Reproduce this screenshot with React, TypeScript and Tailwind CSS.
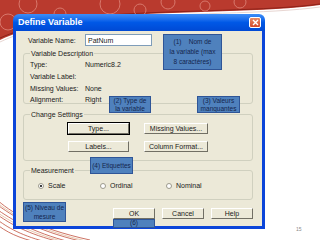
import React from "react";

function Btn({ label, w, focused }: { label: string; w: string; focused?: boolean }) {
    return (
        <div
            className={`${w} h-[11px] flex items-center justify-center bg-[#ECE9D8] border border-t-white border-l-white border-b-[#716F64] border-r-[#716F64] ${
                focused ? "outline outline-1 outline-black" : ""
            }`}
        >
            <span className="text-[7px] leading-none">{label}</span>
        </div>
    );
}

function Radio({ label, checked, w }: { label: string; checked?: boolean; w: string }) {
    return (
        <div className={`${w} flex items-center gap-[4px]`}>
            <div className="w-[6px] h-[6px] rounded-full bg-white border border-[#9C9A8C] flex items-center justify-center">
                {checked && <div className="w-[2px] h-[2px] rounded-full bg-black" />}
            </div>
            <span className="text-[7px] leading-none">{label}</span>
        </div>
    );
}

function Note({ className, children }: { className: string; children: React.ReactNode }) {
    return (
        <div
            className={`absolute flex flex-col items-center justify-center overflow-hidden whitespace-nowrap bg-[#4F81BD] border border-[#2F5597] text-[6.5px] text-[#14264d] ${className}`}
        >
            {children}
        </div>
    );
}

export default function App() {
    return (
        <div className="relative w-[320px] h-[240px] overflow-hidden bg-white font-['Liberation_Sans',Arial,sans-serif] text-[#1a1a1a]">
            {/* slide decoration */}
            <svg className="absolute inset-0" width="320" height="240" viewBox="0 0 320 240">
                <path d="M0 0 H320 V5 C270 12 180 11 110 16 C60 20 25 28 0 40 Z" fill="#B93A2E" />
                <path d="M0 42 C25 30 60 22 110 18 C180 13 270 14 320 7" fill="none" stroke="#E8D6D2" strokeWidth="1" />
                <path d="M0 38 C25 27 60 19 110 15 C180 10 270 11 320 4" fill="none" stroke="#8E2219" strokeWidth="1" />
                <g fill="none" stroke="#D8786C" strokeWidth="1">
                    <circle cx="28" cy="4" r="9" />
                    <circle cx="8" cy="22" r="8" />
                    <circle cx="60" cy="14" r="6" />
                    <circle cx="110" cy="4" r="10" />
                    <circle cx="140" cy="10" r="6" />
                    <circle cx="168" cy="2" r="7" />
                    <circle cx="205" cy="6" r="5" />
                    <circle cx="240" cy="2" r="6" />
                </g>
                <g fill="none" stroke="#C0503E" strokeWidth="0.8">
                    <path d="M-5 198 C10 212 35 228 90 240" />
                    <path d="M-5 203 C12 216 35 230 80 241" />
                    <path d="M-5 208 C12 220 32 232 70 242" />
                    <path d="M-5 213 C10 224 28 234 60 242" />
                    <path d="M-5 218 C8 228 22 236 50 243" />
                    <path d="M-5 223 C6 232 18 238 40 243" />
                </g>
                <g fill="none" stroke="#D9A27A" strokeWidth="0.6">
                    <path d="M-5 201 C11 214 35 229 86 241" />
                    <path d="M-5 211 C11 222 30 233 65 242" />
                </g>
            </svg>

            {/* window */}
            <div className="relative ml-[13px] mt-[14px] w-[252px] h-[215px] flex flex-col">
                <div className="h-[17px] rounded-t-[6px] bg-gradient-to-b from-[#3D8EF8] via-[#0058E6] to-[#0049D4] flex items-center justify-between pl-[5px] pr-[4px]">
                    <span className="text-white font-bold text-[9px] leading-none">Define Variable</span>
                    <div className="w-[12px] h-[11px] rounded-[2px] border border-white bg-gradient-to-b from-[#E88A63] to-[#D2472A] flex items-center justify-center">
                        <svg width="7" height="7" viewBox="0 0 7 7">
                            <path d="M1 1 L6 6 M6 1 L1 6" stroke="white" strokeWidth="1.4" />
                        </svg>
                    </div>
                </div>
                <div className="flex-1 bg-[#ECE9D8] border-x-[3px] border-b-[3px] border-[#0B45D9] flex flex-col pt-[3px] pl-[7px] pr-[9px]">
                    {/* name row */}
                    <div className="flex items-center h-[12px]">
                        <span className="w-[62px] pl-[5px] text-[7px] leading-none">Variable Name:</span>
                        <div className="w-[67px] h-[12px] bg-white border border-[#7F9DB9] flex items-center pl-[2px]">
                            <span className="text-[7px] leading-none">PatNum</span>
                        </div>
                    </div>

                    {/* Variable Description */}
                    <div className="mt-[7px] h-[51px] border border-[#D0D0BF] rounded-[3px] flex flex-col px-[6px]">
                        <span className="-mt-[4px] w-fit bg-[#ECE9D8] px-[1px] text-[7px] leading-none">Variable Description</span>
                        <div className="flex flex-col pt-[2px]">
                            {[
                                ["Type:", "Numeric8.2"],
                                ["Variable Label:", ""],
                                ["Missing Values:", "None"],
                                ["Alignment:", "Right"],
                            ].map(([k, v]) => (
                                <div key={k} className="h-[11.7px] flex items-center">
                                    <span className="w-[55px] text-[7px] leading-none">{k}</span>
                                    <span className="text-[7px] leading-none">{v}</span>
                                </div>
                            ))}
                        </div>
                    </div>

                    {/* Change Settings */}
                    <div className="mt-[10px] h-[47px] border border-[#D0D0BF] rounded-[3px] flex flex-col px-[6px]">
                        <span className="-mt-[4px] w-fit bg-[#ECE9D8] px-[1px] text-[7px] leading-none">Change Settings</span>
                        <div className="flex flex-col gap-[7px] pl-[38px] pt-[5px]">
                            <div className="flex gap-[15px]">
                                <Btn label="Type..." w="w-[61px]" focused />
                                <Btn label="Missing Values..." w="w-[64px]" />
                            </div>
                            <div className="flex gap-[15px]">
                                <Btn label="Labels..." w="w-[61px]" />
                                <Btn label="Column Format..." w="w-[64px]" />
                            </div>
                        </div>
                    </div>

                    {/* Measurement */}
                    <div className="mt-[9px] h-[30px] border border-[#D0D0BF] rounded-[3px] flex flex-col px-[6px]">
                        <span className="-mt-[4px] w-fit bg-[#ECE9D8] px-[1px] text-[7px] leading-none">Measurement</span>
                        <div className="flex items-center pl-[8px] pt-[8px]">
                            <Radio label="Scale" checked w="w-[62px]" />
                            <Radio label="Ordinal" w="w-[66px]" />
                            <Radio label="Nominal" w="w-[60px]" />
                        </div>
                    </div>

                    {/* buttons */}
                    <div className="mt-[8px] flex justify-end gap-[7px] pr-[-1px]">
                        <Btn label="OK" w="w-[42px]" />
                        <Btn label="Cancel" w="w-[42px]" />
                        <Btn label="Help" w="w-[42px]" />
                    </div>
                </div>
            </div>

            {/* annotations */}
            <Note className="left-[163px] top-[34px] w-[59px] h-[36px] leading-[10px]">
                <span>(1)&nbsp;&nbsp;&nbsp;&nbsp;Nom de</span>
                <span>la variable (max</span>
                <span>8 caractères)</span>
            </Note>
            <Note className="left-[109px] top-[96px] w-[42px] h-[17px] leading-[8px]">
                <span>(2) Type de</span>
                <span>la variable</span>
            </Note>
            <Note className="left-[197px] top-[96px] w-[43px] h-[17px] leading-[8px]">
                <span>(3) Valeurs</span>
                <span>manquantes</span>
            </Note>
            <Note className="left-[90px] top-[157px] w-[43px] h-[17px] leading-[8px]">
                <span>(4) Etiquettes</span>
            </Note>
            <Note className="left-[23px] top-[202px] w-[43px] h-[20px] leading-[9px]">
                <span>(5) Niveau de</span>
                <span>mesure</span>
            </Note>
            <Note className="left-[113px] top-[219px] w-[42px] h-[9px] leading-none">
                <span>(6)</span>
            </Note>

            <span className="absolute left-[296px] top-[226px] text-[5px] text-[#8a8a8a]">15</span>
        </div>
    );
}
